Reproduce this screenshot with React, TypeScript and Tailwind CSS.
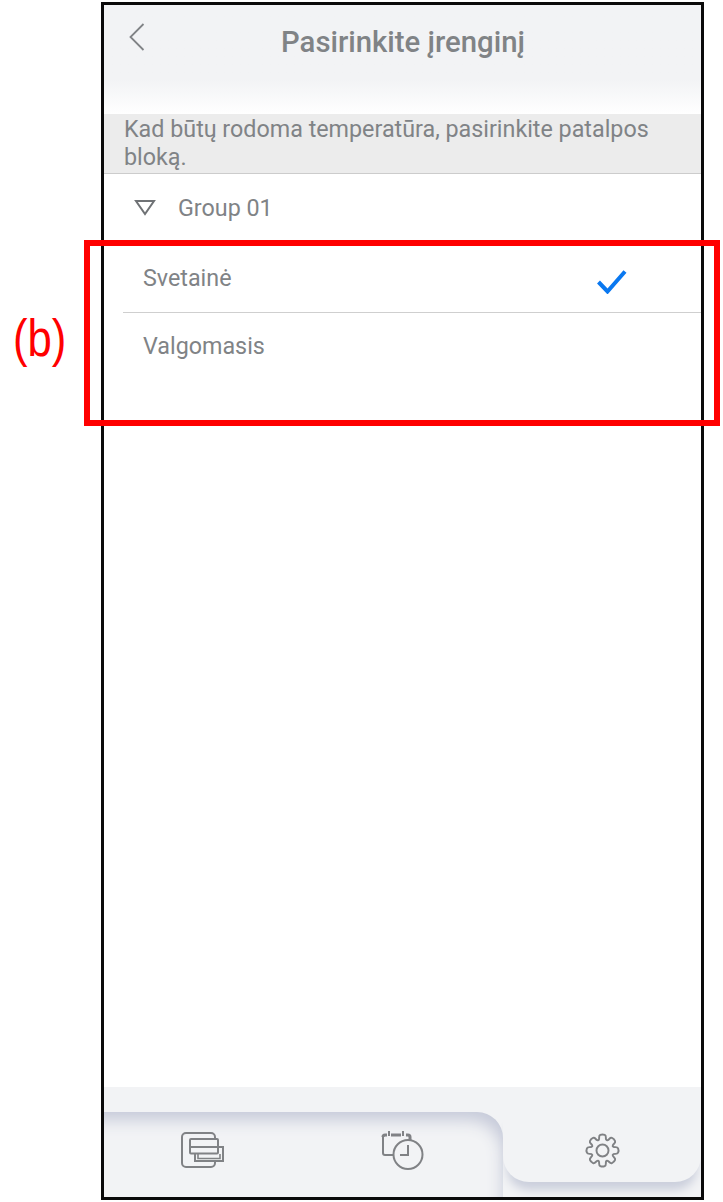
function StackIcon() {
  return (
    <svg width="44" height="38" viewBox="0 0 44 38" fill="none" stroke="#808285" strokeWidth="2">
      <path d="M34 6V5a4 4 0 0 0-4-4H5a4 4 0 0 0-4 4v26a4 4 0 0 0 4 4h25a4 4 0 0 0 4-4v-2" />
      <rect x="9" y="7" width="28" height="14.500" rx="1" />
      <path d="M9 15h33v14H14v-7.500" />
      <path d="M17 22v4.500h22V22" strokeWidth="1.600" />
    </svg>
  );
}

function CalendarClockIcon() {
  return (
    <svg width="44" height="42" viewBox="0 0 44 42" fill="none" stroke="#808285" strokeWidth="2">
      <path d="M2 7v16a2 2 0 0 0 2 2h8" />
      <path d="M2 7a2 2 0 0 1 2-2h2M10 5h10M25 5h2a2 2 0 0 1 2 2v3" strokeWidth="3" />
      <path d="M8 1v5M22 1v5" strokeWidth="2" />
      <circle cx="27" cy="24.500" r="14.500" />
      <path d="M27 15v10h-8" />
    </svg>
  );
}

function gearPath() {
  const cx = 20;
  const cy = 20;
  const point = (r: number, deg: number) => {
    const a = (deg * Math.PI) / 180;
    return `${(cx + r * Math.cos(a)).toFixed(2)} ${(cy + r * Math.sin(a)).toFixed(2)}`;
  };
  let d = '';
  for (let i = 0; i < 8; i++) {
    const a = i * 45 - 90;
    d += `${i === 0 ? 'M' : 'L'}${point(12.5, a - 18)} `;
    d += `C${point(14, a - 13)} ${point(16.500, a - 16)} ${point(17, a - 8)} `;
    d += `C${point(17.500, a - 3)} ${point(17.500, a + 3)} ${point(17, a + 8)} `;
    d += `C${point(16.500, a + 16)} ${point(14, a + 13)} ${point(12.5, a + 18)} `;
    d += `Q${point(11.500, a + 22.5)} ${point(12.5, a + 27)} `;
  }
  return d + 'Z';
}

function GearIcon() {
  return (
    <svg width="37" height="37" viewBox="0 0 40 40" fill="none" stroke="#808285" strokeWidth="2.100">
      <path d={gearPath()} strokeLinejoin="round" />
      <circle cx="20" cy="20" r="6.500" />
    </svg>
  );
}

export default function App() {
  return (
    <div className="relative w-[723px] h-[1202px] bg-white overflow-hidden font-['Roboto',sans-serif]">
      <div className="ml-[101px] mt-[2px] w-[603px] h-[1198px] border-[3px] border-[#0a0a0a] flex flex-col">
        <header className="h-[109px] shrink-0 bg-gradient-to-b from-[#f2f3f5] from-[68%] to-white flex items-start relative">
          <svg width="18" height="30" viewBox="0 0 18 30" fill="none" stroke="#808386" strokeWidth="1.800" className="absolute left-[24px] top-[17px]">
            <path d="M15.500 2 2.500 15l13 13" />
          </svg>
          <h1 className="w-full pl-[1px] mt-[19px] text-center text-[29.300px] leading-[36px] font-medium text-[#808386]">
            Pasirinkite įrenginį
          </h1>
        </header>

        <p className="h-[60px] shrink-0 bg-[#ececec] border-b border-[#cccccc] pl-[20px] text-[23.300px] leading-[28px] pt-[1px] text-[#808386]">
          Kad būtų rodoma temperatūra, pasirinkite patalpos bloką.
        </p>

        <div className="h-[66px] shrink-0 flex items-center pl-[30px] pt-[3px] text-[#808386]">
          <svg width="22" height="17" viewBox="0 0 22 17" fill="none" stroke="#6f7275" strokeWidth="2" className="-mt-[2px]">
            <path d="M2 2h18l-9 13z" />
          </svg>
          <span className="ml-[22px] text-[23.300px]">Group 01</span>
        </div>

        <div className="pl-[19px] flex-1">
          <div className="h-[73px] border-b border-[#cfcfcf] flex items-start justify-between">
            <span className="pl-[20px] mt-[22px] text-[23.300px] leading-[32px] text-[#808386]">Svetainė</span>
            <svg width="30" height="24" viewBox="0 0 30 24" fill="none" stroke="#0a78f0" strokeWidth="4" className="mt-[30px] mr-[74px]">
              <path d="M1.500 12 10.500 21.500 28 1.500" />
            </svg>
          </div>
          <div className="pl-[20px] mt-[17px] text-[23.300px] leading-[32px] text-[#808386]">Valgomasis</div>
        </div>

        <nav className="h-[110px] shrink-0 bg-[#f2f3f5] flex flex-col overflow-hidden">
          <div className="h-[25px] shrink-0" />
          <div className="flex flex-1">
            <div className="w-[399px] rounded-tr-[26px] shadow-[inset_-8px_16px_16px_-8px_#c6cad9] flex items-start">
              <div className="w-[199px] pl-[77px] pt-[20px]">
                <StackIcon />
              </div>
              <div className="pl-[78px] pt-[18px]">
                <CalendarClockIcon />
              </div>
            </div>
            <div className="relative z-10 flex-1 h-[70px] rounded-b-[26px] bg-[#f2f3f5] shadow-[0_12px_10px_-4px_#cbcfdc] flex justify-center">
              <div className="mt-[20px]">
                <GearIcon />
              </div>
            </div>
          </div>
        </nav>
      </div>

      <div className="absolute left-[84px] top-[240px] w-[636px] h-[186px] border-[6px] border-[#ff0000]" />
      <span className="absolute left-[13px] top-[308px] text-[52px] leading-[60px] text-[#ff0000] font-['Liberation_Sans',sans-serif] scale-x-[0.84] origin-left">
        (b)
      </span>
    </div>
  );
}
